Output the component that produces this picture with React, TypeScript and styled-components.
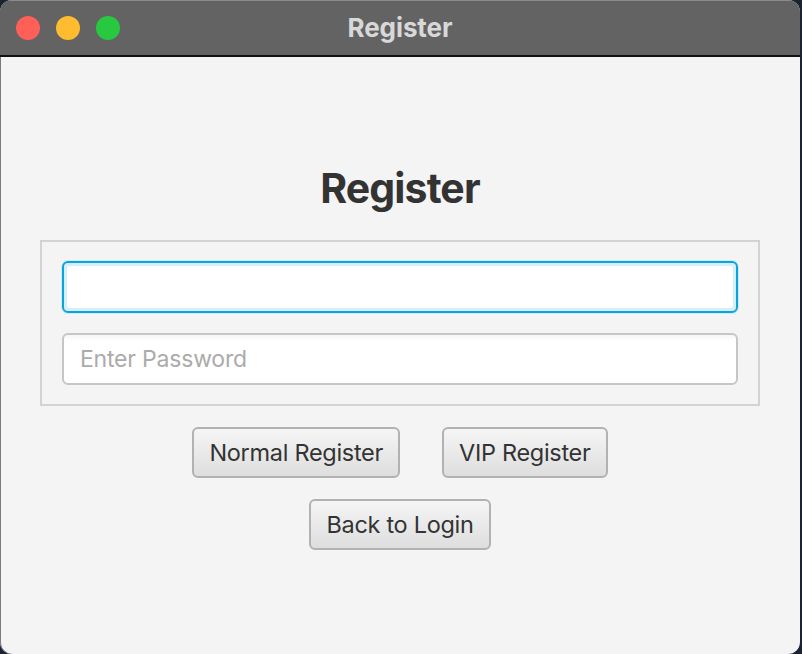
import React from "react";
import styled, { createGlobalStyle } from "styled-components";

const Global = createGlobalStyle`
  html, body { margin: 0; padding: 0; background: #1b2232; }
  body { width: 802px; height: 654px; overflow: hidden; }
  * { box-sizing: border-box; }
`;

const Desktop = styled.div`
  width: 802px;
  height: 654px;
  padding-right: 2px;
`;

const Window = styled.div`
  width: 800px;
  height: 654px;
  border-radius: 12px;
  overflow: hidden;
  display: flex;
  flex-direction: column;
  background: #f4f4f4;
  box-shadow: inset 1px 0 0 #7a7a7a;
`;

const TitleBar = styled.div`
  position: relative;
  height: 57px;
  flex: none;
  background: #636363;
  border-top: 1px solid #8a8a8a;
  border-bottom: 2px solid #111;
  display: flex;
  align-items: center;
  justify-content: center;
`;

const Lights = styled.div`
  position: absolute;
  left: 16px;
  top: 15px;
  display: flex;
  gap: 16px;
`;

const Light = styled.span<{ $c: string }>`
  width: 24px;
  height: 24px;
  border-radius: 50%;
  background: ${(p) => p.$c};
`;

const Title = styled.div`
  font-family: Inter, "Liberation Sans", sans-serif;
  font-weight: 700;
  font-size: 26px;
  letter-spacing: -0.1px;
  color: #d8d8d8;
  margin-top: -2px;
`;

const Content = styled.div`
  flex: 1;
  display: flex;
  flex-direction: column;
  align-items: center;
  padding-top: 108px;
  font-family: Inter, "Liberation Sans", sans-serif;
`;

const Heading = styled.h1`
  margin: 0;
  font-size: 41px;
  font-weight: 700;
  letter-spacing: -0.9px;
  color: #333;
  line-height: 46px;
`;

const Fieldset = styled.div`
  margin-top: 29px;
  width: 720px;
  border: 2px solid #d3d3d3;
  padding: 19px 20px;
  display: flex;
  flex-direction: column;
  gap: 20px;
`;

const Input = styled.input<{ $focused?: boolean }>`
  width: 100%;
  height: 52px;
  border-radius: 6px;
  font-family: Inter, "Liberation Sans", sans-serif;
  font-size: 23px;
  letter-spacing: -0.2px;
  padding: 0 16px;
  color: #333;
  outline: none;
  background: linear-gradient(#f6f6f6, #ffffff 6px);
  border: 2px solid ${(p) => (p.$focused ? "#0aa3da" : "#c6c6c6")};
  box-shadow: ${(p) =>
    p.$focused ? "0 0 0 1px #cdeaf6, inset 0 0 0 3px #d6eef8" : "none"};
  &::placeholder { color: #ababab; }
`;

const ButtonRow = styled.div`
  display: flex;
  gap: 42px;
  margin-top: 21px;
`;

const Button = styled.button`
  height: 51px;
  padding: 0 15px;
  border-radius: 6px;
  border: 2px solid #b2b2b2;
  background: linear-gradient(#f5f5f5, #dedede);
  font-family: Inter, "Liberation Sans", sans-serif;
  font-size: 23.5px;
  color: #333;
  letter-spacing: -0.3px;
`;

const BackRow = styled.div`
  margin-top: 21px;
`;

export default function App() {
  return (
    <Desktop>
      <Global />
      <Window>
        <TitleBar>
          <Lights>
            <Light $c="#fe5f57" />
            <Light $c="#febc2e" />
            <Light $c="#28c840" />
          </Lights>
          <Title>Register</Title>
        </TitleBar>
        <Content>
          <Heading>Register</Heading>
          <Fieldset>
            <Input $focused />
            <Input type="password" placeholder="Enter Password" />
          </Fieldset>
          <ButtonRow>
            <Button>Normal Register</Button>
            <Button>VIP Register</Button>
          </ButtonRow>
          <BackRow>
            <Button>Back to Login</Button>
          </BackRow>
        </Content>
      </Window>
    </Desktop>
  );
}
